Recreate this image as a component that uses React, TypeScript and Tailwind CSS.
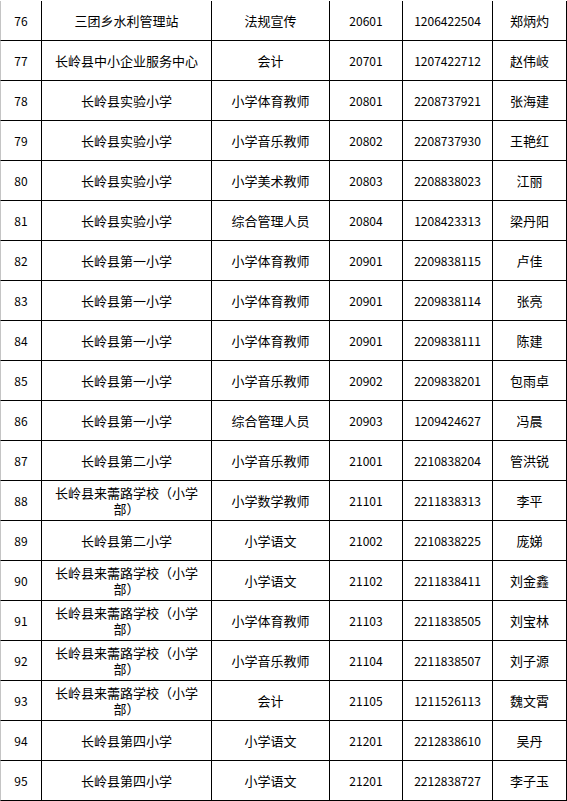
const SCHOOL = "长岭县来薷路学校（小学部）";

const ROWS: [string, string, string, string, string, string][] = [
  ["76", "三团乡水利管理站", "法规宣传", "20601", "1206422504", "郑炳灼"],
  ["77", "长岭县中小企业服务中心", "会计", "20701", "1207422712", "赵伟岐"],
  ["78", "长岭县实验小学", "小学体育教师", "20801", "2208737921", "张海建"],
  ["79", "长岭县实验小学", "小学音乐教师", "20802", "2208737930", "王艳红"],
  ["80", "长岭县实验小学", "小学美术教师", "20803", "2208838023", "江丽"],
  ["81", "长岭县实验小学", "综合管理人员", "20804", "1208423313", "梁丹阳"],
  ["82", "长岭县第一小学", "小学体育教师", "20901", "2209838115", "卢佳"],
  ["83", "长岭县第一小学", "小学体育教师", "20901", "2209838114", "张亮"],
  ["84", "长岭县第一小学", "小学体育教师", "20901", "2209838111", "陈建"],
  ["85", "长岭县第一小学", "小学音乐教师", "20902", "2209838201", "包雨卓"],
  ["86", "长岭县第一小学", "综合管理人员", "20903", "1209424627", "冯晨"],
  ["87", "长岭县第二小学", "小学音乐教师", "21001", "2210838204", "管洪锐"],
  ["88", SCHOOL, "小学数学教师", "21101", "2211838313", "李平"],
  ["89", "长岭县第二小学", "小学语文", "21002", "2210838225", "庞娣"],
  ["90", SCHOOL, "小学语文", "21102", "2211838411", "刘金鑫"],
  ["91", SCHOOL, "小学体育教师", "21103", "2211838505", "刘宝林"],
  ["92", SCHOOL, "小学音乐教师", "21104", "2211838507", "刘子源"],
  ["93", SCHOOL, "会计", "21105", "1211526113", "魏文霄"],
  ["94", "长岭县第四小学", "小学语文", "21201", "2212838610", "吴丹"],
  ["95", "长岭县第四小学", "小学语文", "21201", "2212838727", "李子玉"],
];

const cell = "flex items-center justify-center text-center border-r border-black";

export default function App() {
  return (
    <div
      className="w-[567px] bg-white pt-px text-black text-[13px] leading-[16px]"
      style={{ fontFamily: '"Noto Sans CJK SC", "Noto Sans", sans-serif' }}
    >
      {ROWS.map(([no, unit, post, code, id, name]) => (
        <div
          key={no}
          className="grid grid-cols-[41px_170px_118px_73px_90px_74px] h-[40px] border-b border-l border-b-black border-l-[#c4c4c4]"
        >
          <div className={`${cell} text-[12px]`}>{no}</div>
          <div className={cell}>
            {unit === SCHOOL ? (
              <span>
                长岭县来薷路学校（小学
                <br />
                部）
              </span>
            ) : (
              unit
            )}
          </div>
          <div className={cell}>{post}</div>
          <div className={`${cell} text-[12px]`}>{code}</div>
          <div className={`${cell} text-[12px]`}>{id}</div>
          <div className={cell}>{name}</div>
        </div>
      ))}
    </div>
  );
}
